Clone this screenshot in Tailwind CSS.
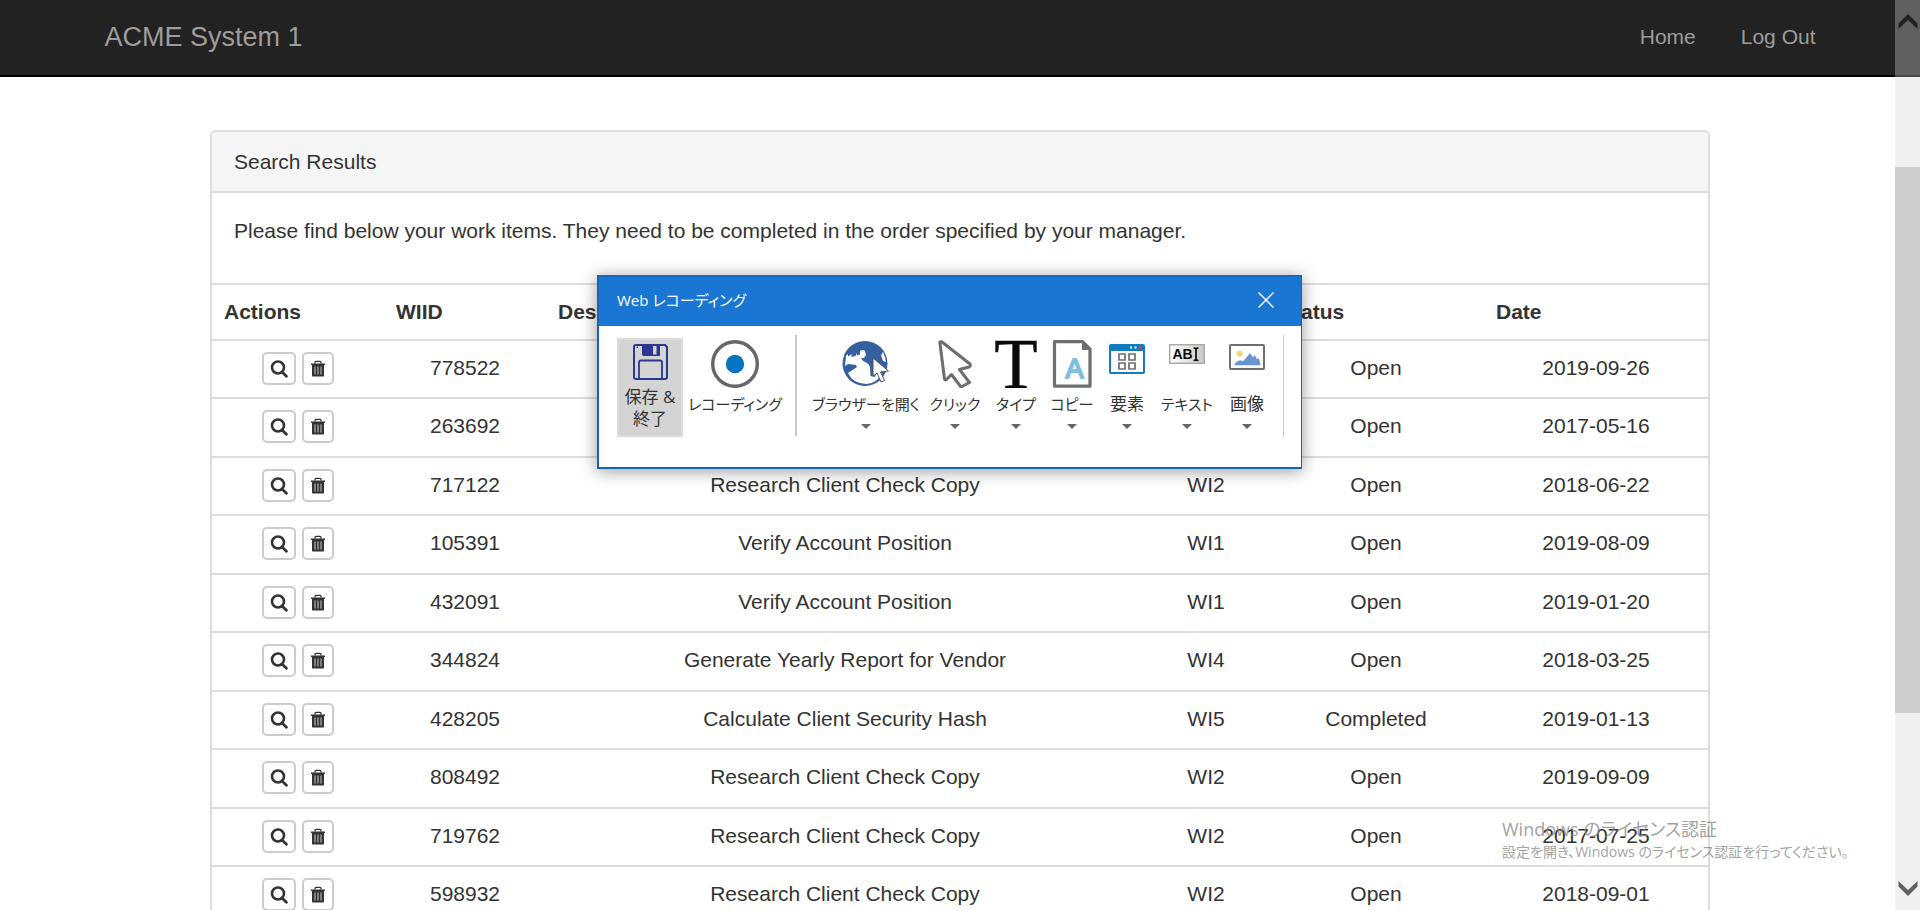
<!DOCTYPE html>
<html lang="en">
<head>
<meta charset="utf-8">
<title>ACME System 1 - Search Results</title>
<script src="https://cdn.jsdelivr.net/npm/@tailwindcss/browser@4"></script>
</head>
<body class="relative h-screen overflow-hidden bg-white font-['Liberation_Sans',Arial,sans-serif] text-[21px] leading-[30px] text-[#333]">

<svg class="hidden" aria-hidden="true">
  <symbol id="i-search" viewBox="0 0 18 18"><circle cx="8" cy="7.5" r="6" fill="none" stroke="#333" stroke-width="2.6"/><path d="M12 12l4.4 4.2" stroke="#333" stroke-width="2.8" stroke-linecap="round"/></symbol>
  <symbol id="i-trash" viewBox="0 0 14 18"><path d="M4 3.6V2.4Q4 1.4 5 1.4h4q1 0 1 1v1.2" fill="none" stroke="#333" stroke-width="1.3"/><path d="M0 3.6h14v1.5H0zM1 5h12v10.400q0 1.200-1.200 1.200H2.200Q1 16.600 1 15.400z" fill="#333"/><path d="M4 6.500v8M7 6.500v8M10 6.500v8" stroke="#bbb" stroke-width="1.100"/></symbol>
  <symbol id="i-caret" viewBox="0 0 10 5"><path d="M0 0h10L5 5z" fill="#666"/></symbol>
</svg>

<nav class="h-[77px] border-b-2 border-black bg-[#222] text-[#9d9d9d]">
  <div class="mx-auto flex h-[73px] max-w-[1755px] items-center justify-between px-[22px]">
    <a href="#" class="text-[27px]">ACME System 1</a>
    <div class="flex gap-[45px]">
      <a href="#">Home</a>
      <a href="#">Log Out</a>
    </div>
  </div>
</nav>

<main class="mx-auto mt-[53px] max-w-[1500px] overflow-hidden rounded-md border-2 border-[#ddd]">
  <h1 class="border-b-2 border-[#ddd] bg-[#f5f5f5] px-[22px] py-[15px] leading-[29px]">Search Results</h1>
  <p class="px-[22px] pt-[23px] pb-[37px]">Please find below your work items. They need to be completed in the order specified by your manager.</p>
  <table class="w-full table-fixed text-center">
    <colgroup><col class="w-[172px]"><col class="w-[162px]"><col><col class="w-[124px]"><col class="w-[216px]"><col class="w-[224px]"></colgroup>
    <thead>
      <tr class="h-14 border-t-2 border-[#ddd] text-left [&>th]:px-3">
        <th>Actions</th><th>WIID</th><th>Description</th><th>Type</th><th>Status</th><th>Date</th>
      </tr>
    </thead>
    <tbody id="rows"></tbody>
  </table>
</main>

<template id="row">
  <tr class="h-[58px] border-t-2 border-[#ddd] align-top even:h-[59px] [&>td]:pt-3 [&>td:first-child]:pt-[11px]">
    <td><div class="flex justify-center gap-1.5">
      <button type="button" aria-label="View" class="flex h-[33px] w-[34px] items-center justify-center rounded-[5px] border-2 border-[#ccc] bg-white"><svg class="size-[18px]"><use href="#i-search"/></svg></button>
      <button type="button" aria-label="Delete" class="flex h-[33px] w-8 items-center justify-center rounded-[5px] border-2 border-[#ccc] bg-white"><svg class="h-[18px] w-[14px]"><use href="#i-trash"/></svg></button>
    </div></td>
    <td></td><td></td><td></td><td></td><td></td>
  </tr>
</template>

<section role="dialog" aria-labelledby="rec-title" class="absolute top-[275px] left-[597px] w-[705px] border-2 border-r border-t-0 border-[#1565b5] bg-white font-['Open_Sans','Noto_Sans_CJK_JP',sans-serif] text-[15px] leading-[22px] [font-feature-settings:'palt'] shadow-[0_2px_16px_rgba(0,0,0,0.4)]">
  <header class="flex h-[51px] items-center justify-between border-t-2 border-[#1668bd] bg-[#1976d2] pr-[27px] pb-1 pl-[18px] text-white">
    <h2 id="rec-title" lang="ja">Web レコーディング</h2>
    <button type="button" aria-label="閉じる"><svg class="size-4" viewBox="0 0 16 16"><path d="M.5.500l15 15M15.500.500l-15 15" stroke="#fff" stroke-width="1.500"/></svg></button>
  </header>
  <div lang="ja" class="flex h-[141px] items-start pt-[9px] pl-[18px] whitespace-nowrap [&>button]:mt-[3px] [&>button]:flex [&>button]:h-[99px] [&>button]:shrink-0 [&>button]:flex-col [&>button]:items-center">
    <button type="button" class="w-[66px] border-2 border-[#dcdcdc] bg-[#d4d4d4] text-[17px]">
      <svg class="mt-1 h-9 w-[35px]" viewBox="0 0 35 36"><path d="M3 1h29l2 2v30q0 2-2 2H3q-2 0-2-2V3q0-2 2-2z" fill="none" stroke="#2d3691" stroke-width="2"/><path d="M9 0h18v12H11q-2 0-2-2z" fill="#2d3691"/><path d="M20 2h3.500v8.500H20z" fill="#d4d4d4"/><path d="M6 35V18.500q0-2 2-2h19q2 0 2 2V35" fill="none" stroke="#2d3691" stroke-width="1.800"/><path d="M3 4l2-2v2z" fill="#2d3691"/></svg>
      <span class="mt-1.5">保存 &amp;<br>終了</span>
    </button>
    <button type="button" class="w-[104px]">
      <svg class="mt-[2px] size-12" viewBox="0 0 48 48"><circle cx="24" cy="24" r="22.300" fill="none" stroke="#666" stroke-width="3.400"/><circle cx="24" cy="24" r="9.200" fill="#0574c1"/></svg>
      <span class="mt-[5px]">レコーディング</span>
    </button>
    <div class="ml-2 h-[101px] w-0.5 shrink-0 bg-[#c8c8c8]"></div>
    <button type="button" class="ml-3.5 w-[110px]">
      <svg class="mt-[2px] h-12 w-[52px]" viewBox="0 0 52 48"><circle cx="25" cy="23.500" r="22.500" fill="#355f9e"/><path d="M5 26L6 16l1.500-2 1 2.500 3-2.500v3l4-1 1.500-3v2.500l3-1V11q3-2 5 0l1 4-2 3h-3l2 3q6 2 7 6l.5 9 4 1 2-3 6-1q-5 10-16 11Q13 44 8 33l9-6-1-2-8-1zM41 15l2-3 2 5 1 5-3-1z" fill="#fff"/><path d="M33 18v18l4-3 4 9 3.500-1.500-4-8.500 8-1z" fill="#fff" stroke="#555" stroke-width="1"/></svg>
      <span class="mt-[5px]">ブラウザーを開く</span>
      <svg class="mt-[9px] h-[5px] w-2.5"><use href="#i-caret"/></svg>
    </button>
    <button type="button" class="w-[68px]">
      <svg class="mt-[2px] h-12 w-[34px]" viewBox="0 0 34 48"><path d="M2 3.500Q1 1 4 2L32 24Q33 26 31 27L21.500 29.500L31.500 42.500L23 47L13.500 34.500L8.500 39.500Q7 40.500 6.500 39z" fill="#fff" stroke="#6c6e71" stroke-width="3" stroke-linejoin="round"/></svg>
      <span class="mt-[5px]">クリック</span>
      <svg class="mt-[9px] h-[5px] w-2.5"><use href="#i-caret"/></svg>
    </button>
    <button type="button" class="w-[54px]">
      <svg class="mt-[2px] h-12 w-[46px]" viewBox="0 0 46 48"><text x="23" y="47.500" text-anchor="middle" font-family="Liberation Serif" font-size="71" fill="#0a0a0a" stroke="#0a0a0a" stroke-width=".4">T</text></svg>
      <span class="mt-[5px]">タイプ</span>
      <svg class="mt-[9px] h-[5px] w-2.5"><use href="#i-caret"/></svg>
    </button>
    <button type="button" class="w-[58px]">
      <svg class="mt-[2px] h-12 w-10" viewBox="0 0 40 48"><path d="M2.500 1.700h28l7.500 7.500v37h-35.500z" fill="#fff" stroke="#6c6e71" stroke-width="3.200" stroke-linejoin="round"/><path d="M30 1v9h9z" fill="#6c6e71"/><text x="22.500" y="38" text-anchor="middle" font-family="Liberation Sans" font-size="27" fill="#7fbde3" stroke="#7fbde3" stroke-width="2" stroke-linejoin="round">A</text></svg>
      <span class="mt-[5px]">コピー</span>
      <svg class="mt-[9px] h-[5px] w-2.5"><use href="#i-caret"/></svg>
    </button>
    <button type="button" class="w-[52px] text-[17px]">
      <svg class="mt-[6px] mb-3.5 h-[30px] w-9" viewBox="0 0 36 30"><rect x="1" y="1" width="34" height="28" rx="1" fill="#fff" stroke="#117dbb" stroke-width="2"/><path d="M1 1h34v6H1z" fill="#117dbb"/><path d="M21 2.500h2v2h-2zM25.500 2.500h2v2h-2z" fill="#fff"/><circle cx="31" cy="3.500" r="1.500" fill="#e5395a"/><path d="M10 10h6v6h-6zM20 10h6v6h-6zM10 19h6v6h-6zM20 19h6v6h-6z" fill="none" stroke="#6c6e71" stroke-width="1.700"/></svg>
      <span class="mt-[5px]">要素</span>
      <svg class="mt-[9px] h-[5px] w-2.5"><use href="#i-caret"/></svg>
    </button>
    <button type="button" class="w-[68px]">
      <svg class="mt-[6px] mb-6 h-5 w-9" viewBox="0 0 36 20"><defs><linearGradient id="tb"><stop stop-color="#fff"/><stop offset="1" stop-color="#c8c8c8"/></linearGradient></defs><rect x=".7" y=".7" width="34.600" height="18.600" fill="url(#tb)" stroke="#aaa9a0" stroke-width="1.400"/><text x="3.500" y="15" font-family="Liberation Sans" font-weight="bold" font-size="14" fill="#0a0a0a">AB</text><path d="M24.500 4q2 0 2.500 1 .5-1 2.500-1M27 4.500v11M24.500 16.500q2 0 2.500-1 .5 1 2.500 1" fill="none" stroke="#0a0a0a" stroke-width="1.700"/></svg>
      <span class="mt-[5px]">テキスト</span>
      <svg class="mt-[9px] h-[5px] w-2.5"><use href="#i-caret"/></svg>
    </button>
    <button type="button" class="w-[52px] text-[17px]">
      <svg class="mt-[6px] mb-[18px] h-[26px] w-9" viewBox="0 0 36 26"><rect x="1" y="1" width="34" height="24" rx="1" fill="#fff" stroke="#6c6e71" stroke-width="2"/><circle cx="10.700" cy="9.700" r="3" fill="#efd772"/><path d="M5 21.300l2-3 4-2 3 1 7-8 3 4 2-2 2 4 2-1 1.500 7z" fill="#6894cf"/></svg>
      <span class="mt-[5px]">画像</span>
      <svg class="mt-[9px] h-[5px] w-2.5"><use href="#i-caret"/></svg>
    </button>
    <div class="ml-2.5 h-[102px] w-px shrink-0 bg-[#c8c8c8]"></div>
  </div>
</section>

<aside lang="ja" class="pointer-events-none absolute right-[82px] bottom-[47px] w-[336px] font-['Open_Sans','Noto_Sans_CJK_JP',sans-serif] whitespace-nowrap text-[#888]/80 [font-feature-settings:'palt']">
  <p class="text-[18px] leading-6">Windows のライセンス認証</p>
  <p class="text-[14px] leading-[22px]">設定を開き、Windows のライセンス認証を行ってください。</p>
</aside>

<div class="absolute inset-y-0 right-0 flex w-[25px] flex-col">
  <button type="button" aria-label="Scroll up" class="flex h-[77px] justify-center bg-white/28 pt-3.5"><svg class="h-[15px] w-5" viewBox="0 0 20 15"><path d="M.5 9.500L10 0l9.500 9.500V15L10 6 .5 15z" fill="#222"/></svg></button>
  <div class="h-[90px] bg-[#f0f0f0]"></div>
  <div class="h-3/5 bg-[#cdcdcd]"></div>
  <button type="button" aria-label="Scroll down" class="flex grow items-end justify-center bg-[#f0f0f0] pb-3.5"><svg class="h-[15px] w-5" viewBox="0 0 20 15"><path d="M.5 5.500L10 15l9.500-9.500V0L10 9 .5 0z" fill="#606060"/></svg></button>
</div>

<script>
const items = [
  ['778522', '', '', 'Open', '2019-09-26'],
  ['263692', '', '', 'Open', '2017-05-16'],
  ['717122', 'Research Client Check Copy', 'WI2', 'Open', '2018-06-22'],
  ['105391', 'Verify Account Position', 'WI1', 'Open', '2019-08-09'],
  ['432091', 'Verify Account Position', 'WI1', 'Open', '2019-01-20'],
  ['344824', 'Generate Yearly Report for Vendor', 'WI4', 'Open', '2018-03-25'],
  ['428205', 'Calculate Client Security Hash', 'WI5', 'Completed', '2019-01-13'],
  ['808492', 'Research Client Check Copy', 'WI2', 'Open', '2019-09-09'],
  ['719762', 'Research Client Check Copy', 'WI2', 'Open', '2017-07-25'],
  ['598932', 'Research Client Check Copy', 'WI2', 'Open', '2018-09-01'],
];
const template = document.getElementById('row');
for (const item of items) {
  const row = template.content.cloneNode(true);
  const cells = row.querySelectorAll('td');
  item.forEach((text, i) => { cells[i + 1].textContent = text; });
  document.getElementById('rows').append(row);
}
</script>
</body>
</html>
